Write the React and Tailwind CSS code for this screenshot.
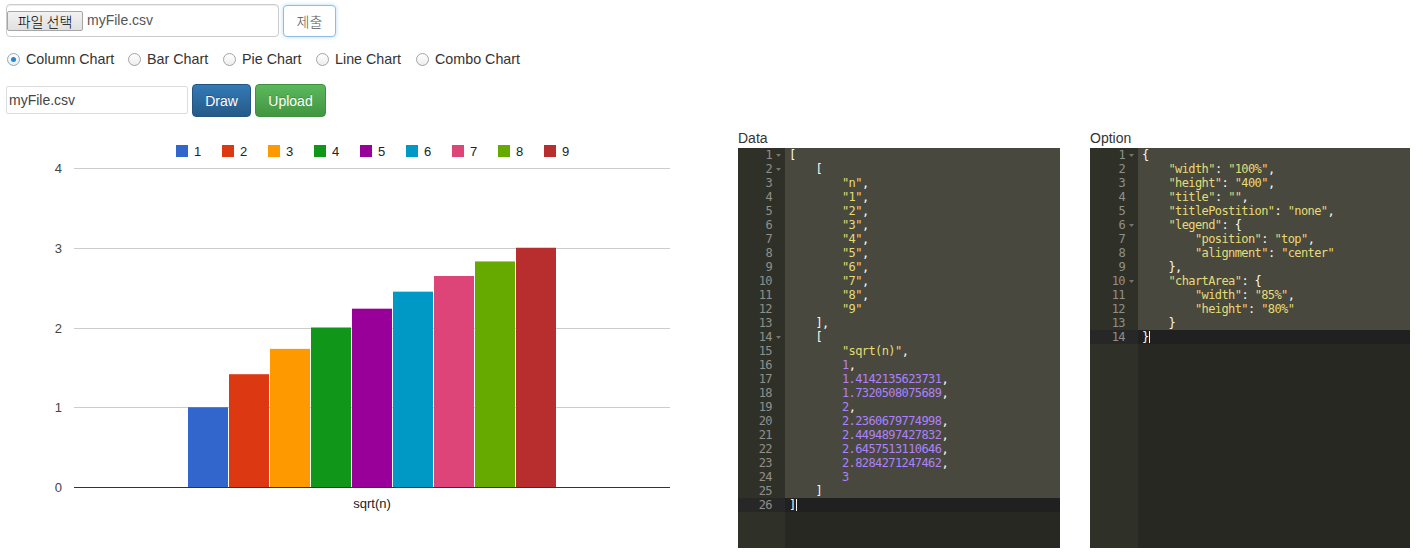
import React from "react";

const COLORS = ["#3366cc", "#dc3912", "#ff9900", "#109618", "#990099", "#0099c6", "#dd4477", "#66aa00", "#b82e2e"];
const VALUES = [1, 1.4142135623731, 1.7320508075689, 2, 2.2360679774998, 2.4494897427832, 2.6457513110646, 2.8284271247462, 3];
const SANS = "Liberation Sans, Arial, sans-serif";

const DATA_LINES = [
  "[",
  "    [",
  '        "n",',
  '        "1",',
  '        "2",',
  '        "3",',
  '        "4",',
  '        "5",',
  '        "6",',
  '        "7",',
  '        "8",',
  '        "9"',
  "    ],",
  "    [",
  '        "sqrt(n)",',
  "        1,",
  "        1.4142135623731,",
  "        1.7320508075689,",
  "        2,",
  "        2.2360679774998,",
  "        2.4494897427832,",
  "        2.6457513110646,",
  "        2.8284271247462,",
  "        3",
  "    ]",
  "]",
];

const OPTION_LINES = [
  "{",
  '    "width": "100%",',
  '    "height": "400",',
  '    "title": "",',
  '    "titlePostition": "none",',
  '    "legend": {',
  '        "position": "top",',
  '        "alignment": "center"',
  "    },",
  '    "chartArea": {',
  '        "width": "85%",',
  '        "height": "80%"',
  "    }",
  "}",
];

function tokenize(line) {
  const re = /("[^"]*")|(\d+(?:\.\d+)?)/g;
  const out = [];
  let last = 0;
  let m;
  while ((m = re.exec(line))) {
    if (m.index > last) out.push(["p", line.slice(last, m.index)]);
    out.push([m[1] ? "s" : "n", m[0]]);
    last = m.index + m[0].length;
  }
  if (last < line.length) out.push(["p", line.slice(last)]);
  return out;
}

const TOKEN_CLASS = {
  p: "text-[#F8F8F2]",
  s: "text-[#E6DB74]",
  n: "text-[#AE81FF]",
};

function FoldArrow() {
  return (
    <svg width="5" height="3" viewBox="0 0 5 3">
      <polygon points="0,0 5,0 2.5,3" fill="#75766f" />
    </svg>
  );
}

function Editor({ lines, folds, widthClass, gutterClass }) {
  const n = lines.length;
  return (
    <div className={`flex h-[400px] bg-[#272822] font-['DejaVu_Sans_Mono',monospace] text-[12px] leading-[14px] tracking-[-0.6px] ${widthClass}`}>
      <div className={`shrink-0 bg-[#2F3129] text-[#8F908A] ${gutterClass}`}>
        {lines.map((_, i) => (
          <div key={i} className={`flex h-[14px] items-center justify-end ${i === n - 1 ? "bg-[#272727]" : ""}`}>
            <span>{i + 1}</span>
            <span className="flex w-[13px] items-center justify-center">{folds.includes(i + 1) ? <FoldArrow /> : null}</span>
          </div>
        ))}
      </div>
      <div className="min-w-0 flex-1">
        {lines.map((line, i) => (
          <div
            key={i}
            className={`flex h-[14px] items-center whitespace-pre pl-[4px] ${i === n - 1 ? "bg-[#202020]" : "bg-[#49483E]"}`}
          >
            {tokenize(line).map(([t, s], j) => (
              <span key={j} className={TOKEN_CLASS[t]}>
                {s}
              </span>
            ))}
            {i === n - 1 ? <span className="inline-block h-[12px] w-px bg-[#F8F8F0]" /> : null}
          </div>
        ))}
      </div>
    </div>
  );
}

function Chart() {
  const base = 487;
  const unit = 79.75;
  return (
    <svg width="738" height="425" viewBox="0 125 738 425" className="block shrink-0">
      {COLORS.map((c, i) => (
        <g key={i}>
          <rect x={176 + 46 * i} y={145} width="12" height="12" fill={c} />
          <text x={194 + 46 * i} y={156} fontSize="13" fontFamily={SANS} fill="#222">
            {i + 1}
          </text>
        </g>
      ))}
      {[4, 3, 2, 1].map((v) => {
        const y = Math.round(base - v * unit) + 0.5;
        return <line key={v} x1="74" x2="670" y1={y} y2={y} stroke="#cccccc" strokeWidth="1" />;
      })}
      {[4, 3, 2, 1, 0].map((v) => {
        const y = Math.round(base - v * unit);
        return (
          <text key={v} x="62" y={y + 5} textAnchor="end" fontSize="13" fontFamily={SANS} fill="#444">
            {v}
          </text>
        );
      })}
      {VALUES.map((v, i) => (
        <rect key={i} x={188 + 41 * i} y={base - v * unit} width="40" height={v * unit} fill={COLORS[i]} />
      ))}
      <line x1="74" x2="670" y1={base + 0.5} y2={base + 0.5} stroke="#333" strokeWidth="1" />
      <text x="372" y="508" textAnchor="middle" fontSize="13" fontFamily={SANS} fill="#222">
        sqrt(n)
      </text>
    </svg>
  );
}

function Radio({ label, checked, widthClass }) {
  return (
    <label className={`flex items-center gap-[6px] ${widthClass}`}>
      <span
        className={`flex h-[13px] w-[13px] shrink-0 items-center justify-center rounded-full border bg-gradient-to-b from-white to-[#ededed] ${
          checked ? "border-[#8aa9c4]" : "border-[#a3a3a3]"
        }`}
      >
        {checked ? <span className="h-[5px] w-[5px] rounded-full bg-[#2a84c6]" /> : null}
      </span>
      <span className="whitespace-nowrap text-[14.3px] leading-[20px] text-[#333]">{label}</span>
    </label>
  );
}

export default function App() {
  return (
    <div className="h-[557px] w-[1423px] overflow-hidden bg-white font-['Liberation_Sans',Arial,sans-serif] text-[14px] text-[#333]">
      <div className="pl-[6px] pt-[4px]">
        <div className="flex items-start">
          <div className="flex h-[33px] w-[273px] items-center rounded-[4px] border border-[#cccccc] shadow-[inset_0_1px_1px_rgba(0,0,0,0.075)]">
            <span className="flex h-[20px] w-[76px] items-center justify-center rounded-[2px] border border-[#a6a6a6] bg-gradient-to-b from-[#f2f2f2] to-[#e0e0e0] font-['Noto_Sans_CJK_KR',sans-serif] text-[14px] font-light leading-none text-black">
              파일 선택
            </span>
            <span className="ml-[4px] text-[14px] text-[#555]">myFile.csv</span>
          </div>
          <button className="ml-[4px] mt-[1px] flex h-[32px] w-[53px] items-center justify-center rounded-[4px] border border-[#8fbbe4] bg-white font-['Noto_Sans_CJK_KR',sans-serif] text-[14px] font-light leading-none text-[#555] shadow-[0_0_4px_rgba(102,175,233,0.45)]">
            제출
          </button>
        </div>

        <div className="ml-[1px] mt-[12px] flex h-[20px] items-center">
          <Radio label="Column Chart" checked widthClass="w-[121px]" />
          <Radio label="Bar Chart" widthClass="w-[95px]" />
          <Radio label="Pie Chart" widthClass="w-[93px]" />
          <Radio label="Line Chart" widthClass="w-[100px]" />
          <Radio label="Combo Chart" widthClass="w-[120px]" />
        </div>

        <div className="mt-[15px] flex items-start">
          <div className="mt-[2px] flex h-[28px] w-[182px] items-center rounded-[2px] border border-[#dddddd] pl-[2px] text-[14px] text-[#444]">
            myFile.csv
          </div>
          <button className="ml-[4px] flex h-[33px] w-[59px] items-center justify-center rounded-[4px] border border-[#245580] bg-gradient-to-b from-[#337ab7] to-[#265a88] pt-[2px] text-[14px] text-white [text-shadow:0_-1px_0_rgba(0,0,0,0.2)]">
            Draw
          </button>
          <button className="ml-[4px] flex h-[33px] w-[71px] items-center justify-center rounded-[4px] border border-[#3e8f3e] bg-gradient-to-b from-[#5cb85c] to-[#419641] pt-[2px] text-[14px] text-white [text-shadow:0_-1px_0_rgba(0,0,0,0.2)]">
            Upload
          </button>
        </div>
      </div>

      <div className="mt-[8px] flex">
        <Chart />
        <div className="w-[322px] shrink-0">
          <div className="h-[23px] pt-[5px] text-[14px] leading-[16px] text-[#333]">Data</div>
          <Editor lines={DATA_LINES} folds={[1, 2, 14]} widthClass="w-[322px]" gutterClass="w-[47px]" />
        </div>
        <div className="ml-[30px] w-[320px] shrink-0">
          <div className="h-[23px] pt-[5px] text-[14px] leading-[16px] text-[#333]">Option</div>
          <Editor lines={OPTION_LINES} folds={[1, 6, 10]} widthClass="w-[320px]" gutterClass="w-[48px]" />
        </div>
      </div>
    </div>
  );
}
